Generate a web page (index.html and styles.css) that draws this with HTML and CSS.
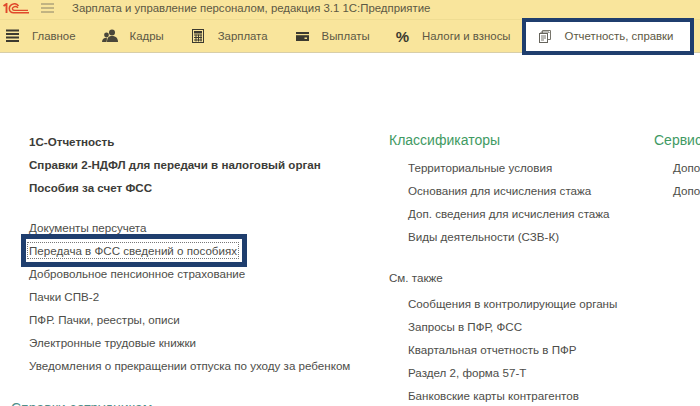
FILE: index.html
```html
<!DOCTYPE html>
<html lang="ru">
  <head>
    <meta charset="UTF-8" />
    <meta name="viewport" content="width=device-width, initial-scale=1.0" />
    <title>Зарплата и управление персоналом</title>
    <link rel="stylesheet" href="styles.css">
  </head>
  <body>
    <div class="title-bar">
      <svg class="logo" width="26" height="11" viewBox="0 0 26 11">
        <path d="M0.5 3 L3.5 1 V10" fill="none" stroke="#e0492c" stroke-width="1.9" />
        <path d="M15.5 3 C14.2 1.2 12 0.5 10.3 1 C7.5 1.7 6.3 3.5 6.3 5.6 C6.3 8 8.2 9.8 10.5 9.8 H26" fill="none" stroke="#e0492c" stroke-width="1.6" />
        <path d="M15 4.8 C13.8 3.6 12.2 3.3 11 3.8 C9.6 4.4 9.2 5.5 9.5 6.3 C9.8 7.2 10.8 7.4 11.8 7.4 H25" fill="none" stroke="#e0492c" stroke-width="1.3" />
      </svg>
      <svg class="burger" width="13" height="10" viewBox="0 0 13 10">
        <path d="M0 1 H13 M0 5 H13 M0 9 H13" stroke="#8a8268" stroke-width="1" />
      </svg>
      <span class="app-title">Зарплата и управление персоналом, редакция 3.1 1С:Предприятие</span>
    </div>

    <nav class="sections">
      <a class="section section-main">
        <svg width="13" height="14" viewBox="0 0 13 14"><path d="M0 1.5 H13 M0 5 H13 M0 8.5 H13 M0 12 H13" stroke="#3c3a30" stroke-width="1.8" /></svg>
        <span>Главное</span>
      </a>
      <a class="section section-staff">
        <svg width="16" height="14" viewBox="0 0 16 14">
          <circle cx="10" cy="3.5" r="3" fill="#4a463a" />
          <path d="M5 13 C5 8.5 7 7 10 7 C13 7 16 8.5 16 13 Z" fill="#4a463a" />
          <circle cx="4.5" cy="6" r="2.4" fill="#4a463a" />
          <path d="M0 13 C0 10 2 8.8 4.5 8.8 C5 8.8 5 10 4.5 13 Z" fill="#4a463a" />
        </svg>
        <span>Кадры</span>
      </a>
      <a class="section section-pay">
        <svg width="12" height="14" viewBox="0 0 12 14">
          <rect x="0.5" y="0.5" width="11" height="13" fill="none" stroke="#3c3a30" />
          <rect x="2" y="2" width="8" height="2.5" fill="#3c3a30" />
          <path d="M2 6 H10 M2 8.5 H10 M2 11 H10 M4 5.5 V12.5 M6.5 5.5 V12.5 M9 5.5 V12.5" stroke="#3c3a30" stroke-width="1" />
        </svg>
        <span>Зарплата</span>
      </a>
      <a class="section section-out">
        <svg width="13" height="9" viewBox="0 0 13 9">
          <rect width="13" height="9" fill="#3c3a30" />
          <rect y="2" width="13" height="1.2" fill="#f5df8d" />
          <rect x="8.5" y="5.5" width="2.5" height="1.5" fill="#f5df8d" />
        </svg>
        <span>Выплаты</span>
      </a>
      <a class="section section-tax">
        <span class="percent">%</span>
        <span>Налоги и взносы</span>
      </a>
      <a class="section section-active">
        <svg width="12" height="13" viewBox="0 0 12 13">
          <path d="M3.5 3 V0.5 H11.5 V9.5 H8.5 M2 3 V2 H10 V3" fill="none" stroke="#77756c" />
          <rect x="0.5" y="3.5" width="8" height="9" fill="#fff" stroke="#66645c" />
          <path d="M2 6 H7 M2 8 H7 M2 10 H5" stroke="#77756c" />
        </svg>
        <span>Отчетность, справки</span>
      </a>
    </nav>

    <main class="content">
      <section class="col col-reports">
        <ul class="links strong-links">
          <li>1С-Отчетность</li>
          <li>Справки 2-НДФЛ для передачи в налоговый орган</li>
          <li>Пособия за счет ФСС</li>
        </ul>
        <ul class="links plain-links">
          <li>Документы персучета</li>
          <li class="marked"><span>Передача в ФСС сведений о пособиях</span></li>
          <li>Добровольное пенсионное страхование</li>
          <li>Пачки СПВ-2</li>
          <li>ПФР. Пачки, реестры, описи</li>
          <li>Электронные трудовые книжки</li>
          <li>Уведомления о прекращении отпуска по уходу за ребенком</li>
        </ul>
        <h2 class="group group-bottom">Справки сотрудникам</h2>
      </section>

      <section class="col col-refs">
        <h2 class="group">Классификаторы</h2>
        <ul class="links sub-links">
          <li>Территориальные условия</li>
          <li>Основания для исчисления стажа</li>
          <li>Доп. сведения для исчисления стажа</li>
          <li>Виды деятельности (СЗВ-К)</li>
        </ul>
        <h3 class="see-also">См. также</h3>
        <ul class="links sub-links">
          <li>Сообщения в контролирующие органы</li>
          <li>Запросы в ПФР, ФСС</li>
          <li>Квартальная отчетность в ПФР</li>
          <li>Раздел 2, форма 57-Т</li>
          <li>Банковские карты контрагентов</li>
        </ul>
      </section>

      <section class="col col-service">
        <h2 class="group">Сервис</h2>
        <ul class="links sub-links">
          <li>Дополнительные</li>
          <li>Дополнительные</li>
        </ul>
      </section>
    </main>
  </body>
</html>
```

FILE: styles.css
```css
html,
body {
  margin: 0;
  padding: 0;
  height: 406px;
  overflow: hidden;
}

body {
  width: 700px;
  background-color: #fff;
  font-family: "Liberation Sans", Arial, sans-serif;
  font-size: 11.6px;
  color: #4d4d49;
}

ul {
  list-style: none;
  margin: 0;
  padding: 0;
}

.title-bar {
  box-sizing: border-box;
  display: flex;
  align-items: center;
  height: 20px;
  padding-bottom: 3px;
  background-color: #f9e59c;
  border-bottom: 1px solid #efdc92;
}

.logo {
  margin-left: 3px;
}

.burger {
  margin-left: 12px;
}

.app-title {
  margin-left: 18px;
  font-size: 11.4px;
  color: #5c5844;
  white-space: nowrap;
}

.sections {
  display: flex;
  align-items: center;
  height: 32px;
  background-color: #f9e59c;
  border-bottom: 1px solid #d8cea8;
  color: #5c5844;
  font-size: 11.4px;
  white-space: nowrap;
}

.section {
  display: flex;
  align-items: center;
  gap: 13px;
}

.section-main {
  margin-left: 6px;
}

.section-staff {
  margin-left: 26px;
  gap: 12px;
}

.section-pay {
  margin-left: 28px;
  gap: 14px;
}

.section-out {
  margin-left: 28px;
}

.section-tax {
  margin-left: 26px;
}

.percent {
  font-size: 15px;
  font-weight: bold;
  color: #3c3a30;
}

.section-active {
  box-sizing: border-box;
  height: 37px;
  width: 172px;
  margin-left: 11px;
  padding-left: 13px;
  background-color: #fff;
  border: 4px solid #1f3e6e;
  gap: 14px;
}

.content {
  display: flex;
  padding-top: 77px;
}

.col-reports {
  width: 389px;
  flex: none;
  padding-left: 29px;
  box-sizing: border-box;
}

.col-refs {
  width: 265px;
  flex: none;
  margin-top: -2px;
}

.col-service {
  flex: none;
  margin-top: -2px;
  white-space: nowrap;
}

.links li {
  height: 23px;
  line-height: 23px;
  white-space: nowrap;
}

.strong-links {
  font-weight: bold;
  color: #3c3c38;
}

.plain-links {
  margin-top: 17px;
}

.marked {
  position: relative;
}

/* рамка поверх пункта, на поток не влияет */
.marked::before {
  content: "";
  position: absolute;
  left: -8px;
  top: -5px;
  width: 216px;
  height: 23px;
  border: 5px solid #1f3e6e;
  pointer-events: none;
}

.marked span {
  outline: 1px dotted #777;
  outline-offset: 1px;
}

.group {
  margin: 0;
  font-size: 14px;
  font-weight: normal;
  color: #3f9a63;
  line-height: 24px;
}

.group-bottom {
  margin-top: 19px;
  margin-left: -18px;
  color: #4f8f8a;
}

.sub-links {
  margin-top: 4px;
  padding-left: 19px;
}

.see-also {
  margin: 20px 0 4px;
  font-size: 11.6px;
  font-weight: normal;
  line-height: 20px;
}
```
